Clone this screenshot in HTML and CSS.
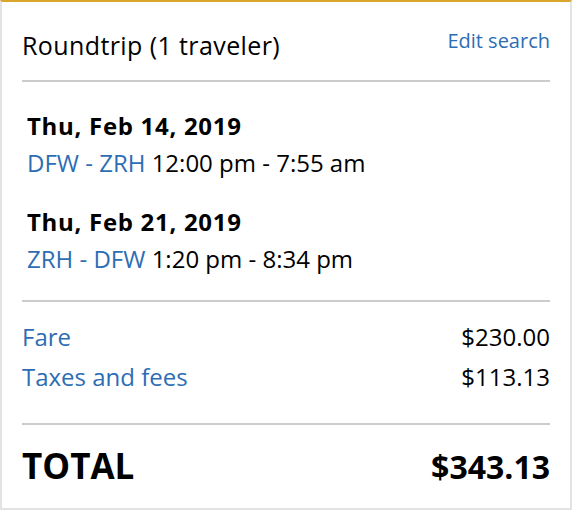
FILE: index.html
```html
<!DOCTYPE html>
<html>
<head>
<meta charset="utf-8">
<link rel="stylesheet" href="styles.css">
</head>
<body>
<div class="card">
  <div class="head">
    <div class="title">Roundtrip (1 traveler)</div>
    <a class="link edit">Edit search</a>
  </div>
  <div class="flights">
    <div class="flight">
      <div class="date">Thu, Feb 14, 2019</div>
      <div class="route"><span class="link">DFW - ZRH</span> 12:00 pm - 7:55 am</div>
    </div>
    <div class="flight">
      <div class="date">Thu, Feb 21, 2019</div>
      <div class="route"><span class="link">ZRH - DFW</span> 1:20 pm - 8:34 pm</div>
    </div>
  </div>
  <div class="prices">
    <div class="row"><span class="link">Fare</span><span>$230.00</span></div>
    <div class="row"><span class="link">Taxes and fees</span><span>$113.13</span></div>
  </div>
  <div class="total">
    <span class="label">TOTAL</span><span class="amount">$343.13</span>
  </div>
</div>
</body>
</html>
```
FILE: styles.css
```css
html, body {
  margin: 0;
  padding: 0;
  background: #fff;
}
body {
  font-family: "Open Sans", "Noto Sans", sans-serif;
  color: #000;
}
.card {
  box-sizing: border-box;
  width: 572px;
  height: 510px;
  border: 2px solid #e3e3e3;
  border-top: 2px solid #d9a62b;
  padding: 0 20px;
}
.link {
  color: #2d6db4;
  text-decoration: none;
}
.head {
  display: flex;
  justify-content: space-between;
  align-items: center;
  padding: 28px 0 20px;
  border-bottom: 2px solid #cccccc;
}
.title {
  font-size: 25px;
  line-height: 30px;
  letter-spacing: 0.4px;
}
.edit {
  font-size: 20px;
  line-height: 24px;
  margin-top: -9px;
}
.flights {
  padding: 28px 0 20px 5px;
  border-bottom: 2px solid #cccccc;
  display: flex;
  flex-direction: column;
  gap: 22px;
}
.date {
  font-weight: 700;
  font-size: 24px;
  line-height: 32px;
  letter-spacing: 0.7px;
}
.route {
  font-size: 24px;
  line-height: 42px;
}
.prices {
  padding: 20px 0 31px;
  border-bottom: 2px solid #cccccc;
  display: flex;
  flex-direction: column;
  gap: 10px;
}
.row {
  display: flex;
  justify-content: space-between;
  font-size: 24px;
  line-height: 30px;
}
.total {
  display: flex;
  justify-content: space-between;
  align-items: baseline;
  padding-top: 19px;
  font-weight: 700;
}
.total .label {
  font-size: 35px;
  line-height: 44px;
}
.total .amount {
  font-size: 32px;
}
```
